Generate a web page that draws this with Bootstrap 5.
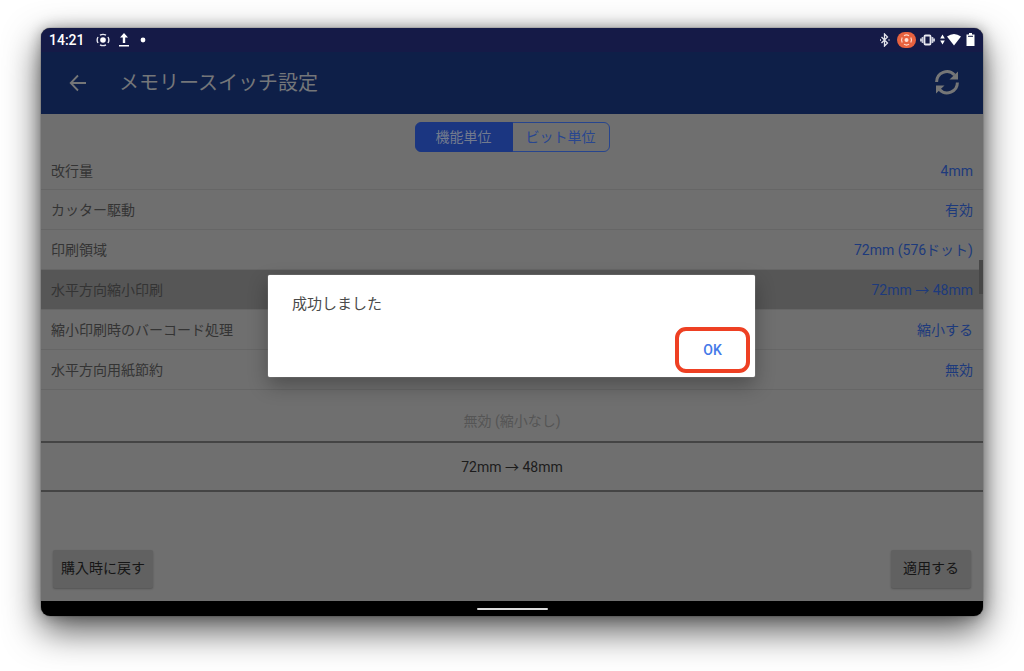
<!DOCTYPE html>
<html lang="ja">
<head>
<meta charset="utf-8">
<meta name="viewport" content="width=device-width, initial-scale=1">
<title>メモリースイッチ設定</title>
<link href="https://cdn.jsdelivr.net/npm/bootstrap@5.3.0/dist/css/bootstrap.min.css" rel="stylesheet">
<style>
  body { font: 14px/20px Roboto, "Noto Sans CJK JP", sans-serif; color: #333; background: #fff; padding: 28px 41px 55px; }
  .tablet { border-radius: 9px; background: #6f6f6f; box-shadow: 0 14px 36px rgba(0,0,0,.68), 0 0 14px rgba(0,0,0,.3), 0 0 1px #000; }
  .status { height: 24px; background: #151a47; color: #fff; padding: 0 8px; font-size: 14px; font-weight: 500; }
  .status .left-icons { gap: 9px; margin-left: 11px; }
  .appbar { height: 62px; background: #0e1f48; padding: 0 22px 0 27px; }
  .appbar h1 { font-size: 20px; line-height: 28px; font-weight: 400; color: #747679; margin-left: 31px; }
  .appbar .icon-btn { border: 0; background: none; padding: 0; line-height: 0; color: #757677; }
  .units { padding-top: 8px; }
  .units .btn { --bs-btn-font-size: 14px; --bs-btn-line-height: 20px; --bs-btn-padding-y: 4px; --bs-btn-padding-x: 0;
    --bs-btn-color: #284690; --bs-btn-border-color: #27458e; --bs-btn-border-radius: 6px;
    --bs-btn-active-bg: #1b3681; --bs-btn-active-border-color: #1b3681; --bs-btn-active-color: #737b8e; width: 98px; }
  .settings .list-group-item { display: flex; align-items: center; height: 40px; padding: 0 10px; background: none;
    border-color: #666; border-radius: 0; color: #343434; border-width: 0 0 1px; }
  .settings .list-group-item:first-child { height: 38px; }
  .settings .list-group-item.chosen { background: #565656; }
  .settings .val { color: #1d3a7c; }
  .thumb { right: 0; top: 108px; width: 4px; height: 34px; background: #474747; }
  .wheel { padding-top: 21px; }
  .wheel .faded { color: #555; padding-bottom: 10px; }
  .wheel .current { border: solid #444; border-width: 2px 0; padding: 14px 0 13px; color: #1c1c1c; }
  .foot { padding: 0 12px 13px; }
  .foot .btn { --bs-btn-font-size: 14px; --bs-btn-line-height: 20px; --bs-btn-padding-y: 8px; --bs-btn-padding-x: 8px; --bs-btn-bg: #616161;
    --bs-btn-color: #161616; --bs-btn-border-width: 0; --bs-btn-border-radius: 2px; padding-bottom: 10px; box-shadow: 0 1px 2px rgba(0,0,0,.25); }
  .foot .apply { --bs-btn-padding-x: 12px; }
  .navstrip { height: 15px; background: #000; }
  .navstrip span { width: 71px; height: 2px; background: #ddd; border-radius: 1px; }
  .dialog { width: 487px; max-width: 90%; background: #fff; border-radius: 2px; box-shadow: 0 8px 20px rgba(0,0,0,.3), 0 0 1px #fff; padding: 18px 5px 4px 24px; }
  .dialog p { font-size: 15px; line-height: 22px; color: #4a4a4a; margin-bottom: 12px; }
  .dialog .btn { --bs-btn-font-size: 14px; --bs-btn-line-height: 20px; --bs-btn-font-weight: 500; --bs-btn-color: #4479e8;
    --bs-btn-border-width: 4px; --bs-btn-border-color: #ee4023; --bs-btn-border-radius: 11px; --bs-btn-padding-y: 9px; --bs-btn-padding-x: 0; width: 75px; }
  .overlay { padding-bottom: 1px; padding-right: 1px; }
</style>
</head>
<body class="d-flex flex-column min-vh-100">
<div class="tablet flex-grow-1 d-flex flex-column overflow-hidden">
  <div class="status d-flex align-items-center">
    <span>14:21</span>
    <div class="left-icons d-flex align-items-center">
      <svg width="14" height="14" viewBox="0 0 14 14" fill="none" stroke="#e6e6ee"><circle cx="7" cy="7" r="2.800" fill="#fff" stroke="none"/><path d="M4 2.200a6 6 0 0 1 6 0M4 11.800a6 6 0 0 0 6 0M2 4a6 6 0 0 0 0 6M12 4a6 6 0 0 1 0 6" stroke-width="1.400"/></svg>
      <svg width="10" height="14" viewBox="0 0 10 14" fill="#fff"><path d="M5 0 1 4.500h2.800V10h2.400V4.500H9zM0 12h10v1.400H0z"/></svg>
      <svg width="10" height="14" viewBox="0 0 10 14"><circle cx="5" cy="7" r="2.400" fill="#fff"/></svg>
    </div>
    <div class="ms-auto d-flex align-items-center gap-1">
      <svg width="14" height="14" viewBox="0 0 14 14" fill="none" stroke="#e4e4ec" stroke-width="1.300"><path d="m2.500 4 6 6-3 3V1l3 3-6 6"/><path d="M1 7h1M9.500 7h1"/></svg>
      <svg width="19" height="16" viewBox="0 0 19 16" fill="none" stroke="#ffd9cb"><rect width="19" height="16" rx="8" fill="#e8623f" stroke="none"/><circle cx="9.500" cy="8" r="2" fill="#ffe3d8" stroke="none"/><path d="M7 3.700a5 5 0 0 1 5 0M7 12.300a5 5 0 0 0 5 0M5.200 5.500a5 5 0 0 0 0 5M13.800 5.500a5 5 0 0 1 0 5" stroke-width="1.200"/></svg>
      <svg width="16" height="14" viewBox="0 0 16 14" fill="none" stroke="#c8c9d8" stroke-width="1.800"><rect x="4.500" y="2.500" width="6" height="9" rx="1" stroke="#e8e8f0"/><path d="M2.600 4v6M12.400 4v6M.9 5.500v3M14.100 5.500v3"/></svg>
      <svg width="22" height="14" viewBox="0 0 22 14" fill="#fff"><path d="M2.500 1.500 4.800 5.500H.2zM2.500 11.500 4.800 7.500H.2zM7 3.500Q14-1.500 21 3.500L14 12.500z"/></svg>
      <svg width="9" height="14" viewBox="0 0 9 14" fill="#fff"><path d="M3 0h3v1.500h2.500V13H.5V1.500H3z"/><path d="M2 3.300h5" stroke="#151a47" stroke-width="1"/></svg>
    </div>
  </div>

  <div class="position-relative flex-grow-1 d-flex flex-column">
    <header class="appbar d-flex align-items-center">
      <button class="icon-btn" type="button" aria-label="戻る">
        <svg width="20" height="20" viewBox="0 0 20 20" fill="none" stroke="currentColor" stroke-width="1.800"><path d="M18 10H3M10 2.500 2.700 10 10 17.500"/></svg>
      </button>
      <h1 class="mb-0">メモリースイッチ設定</h1>
      <button class="icon-btn ms-auto" type="button" aria-label="更新">
        <svg width="28" height="28" viewBox="0 0 28 28" fill="none" stroke="currentColor" stroke-width="3"><path d="M3.600 13A10.300 10.300 0 0 1 21.500 6M24.400 13.500A10.300 10.300 0 0 1 6.500 20.500"/><path d="M25 2.500V10.500H16.500zM3 24.500V16.500H11.500z" fill="currentColor" stroke="none"/></svg>
      </button>
    </header>

    <div class="units d-flex justify-content-center">
      <div class="btn-group" role="group" aria-label="表示単位">
        <button type="button" class="btn active" aria-pressed="true">機能単位</button>
        <button type="button" class="btn" aria-pressed="false">ビット単位</button>
      </div>
    </div>

    <div class="settings position-relative">
      <ul class="list-group">
        <li class="list-group-item">改行量<span class="val ms-auto">4mm</span></li>
        <li class="list-group-item">カッター駆動<span class="val ms-auto">有効</span></li>
        <li class="list-group-item">印刷領域<span class="val ms-auto">72mm (576ドット)</span></li>
        <li class="list-group-item chosen">水平方向縮小印刷<span class="val ms-auto">72mm → 48mm</span></li>
        <li class="list-group-item">縮小印刷時のバーコード処理<span class="val ms-auto">縮小する</span></li>
        <li class="list-group-item">水平方向用紙節約<span class="val ms-auto">無効</span></li>
      </ul>
      <div class="thumb position-absolute"></div>
    </div>

    <div class="wheel text-center">
      <div class="faded">無効 (縮小なし)</div>
      <div class="current">72mm → 48mm</div>
    </div>

    <div class="foot mt-auto d-flex justify-content-between">
      <button type="button" class="btn">購入時に戻す</button>
      <button type="button" class="btn apply">適用する</button>
    </div>

    <div class="overlay position-absolute top-0 start-0 w-100 h-100 d-flex align-items-center justify-content-center">
      <div class="dialog" role="alertdialog" aria-labelledby="message">
        <p id="message">成功しました</p>
        <div class="text-end"><button type="button" class="btn">OK</button></div>
      </div>
    </div>
  </div>

  <div class="navstrip d-flex align-items-center justify-content-center"><span></span></div>
</div>
<script src="https://cdn.jsdelivr.net/npm/bootstrap@5.3.0/dist/js/bootstrap.bundle.min.js"></script>
</body>
</html>
